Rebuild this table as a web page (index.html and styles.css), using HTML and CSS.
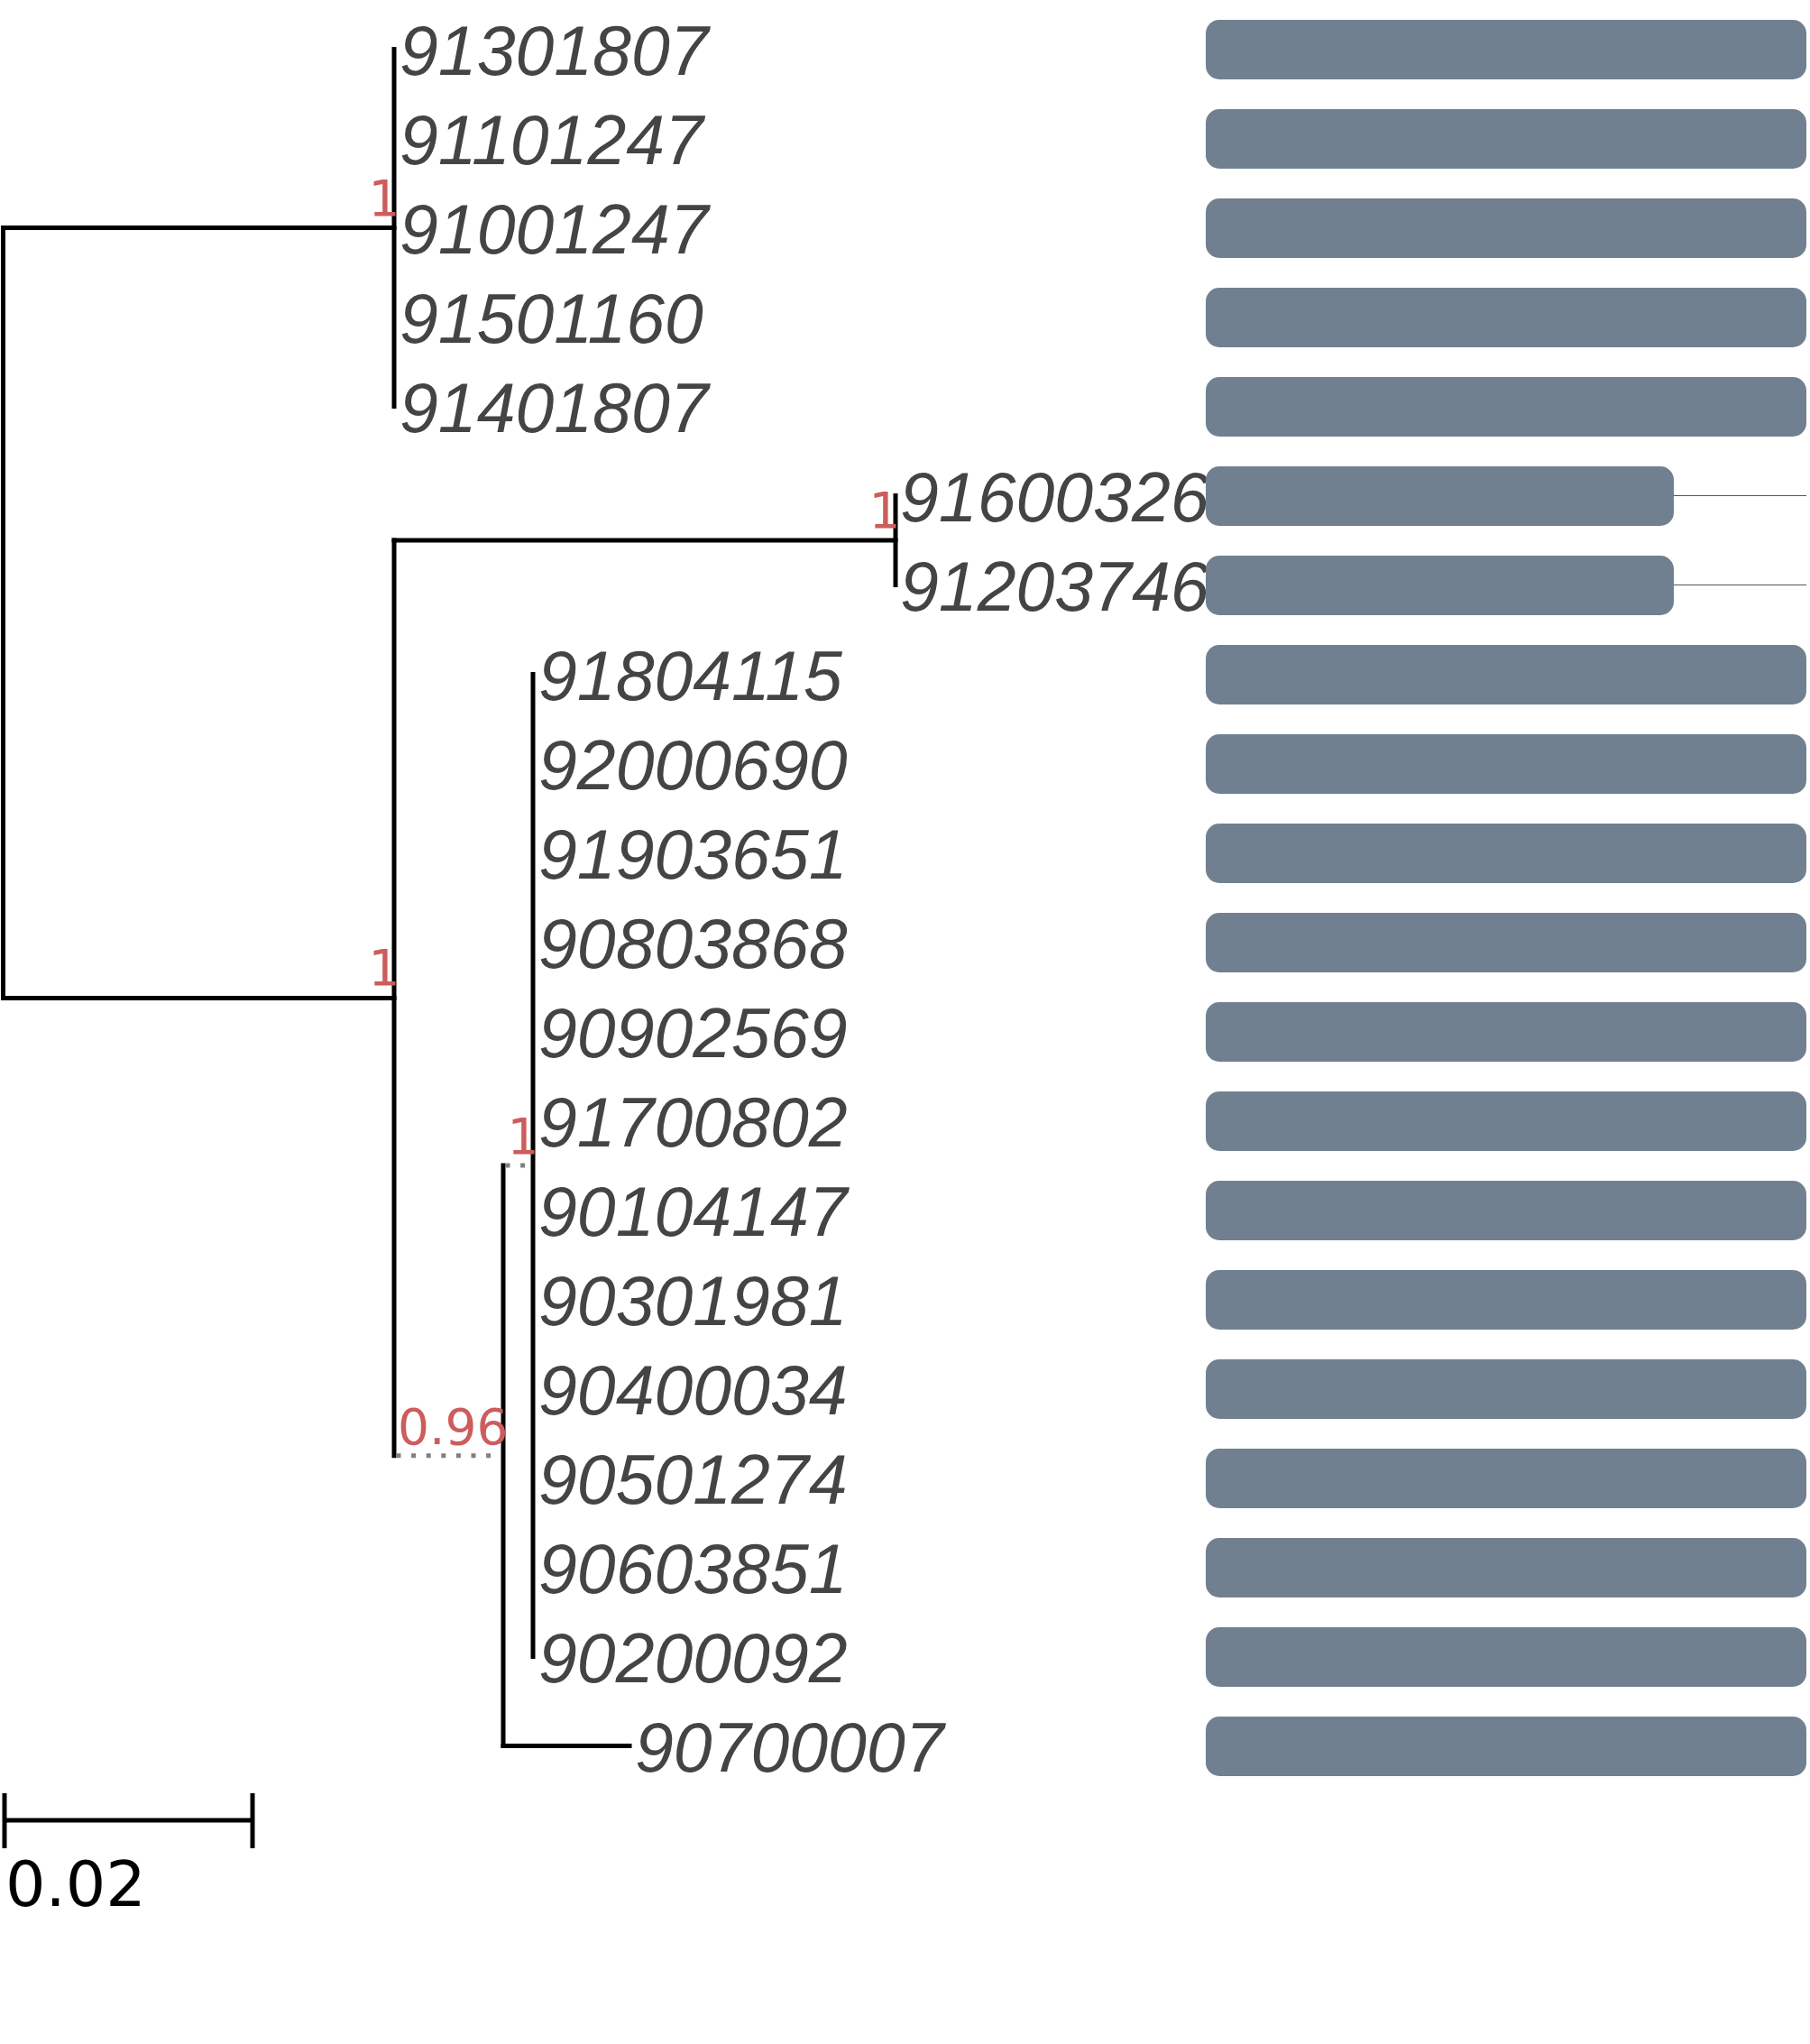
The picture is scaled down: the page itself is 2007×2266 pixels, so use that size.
FILE: index.html
```html
<!DOCTYPE html>
<html lang="en">
<head>
<meta charset="utf-8">
<title>Tree</title>
<link rel="stylesheet" href="styles.css">
</head>
<body>
<div class="figure">
  <svg class="tree" width="1337" height="1990" viewBox="0 0 1337 1990">
    <g class="solid">
      <line x1="3.5" y1="252.5" x2="3.5" y2="1106.4"/>
      <line x1="3.5" y1="252.5" x2="437" y2="252.5"/>
      <line x1="3.5" y1="1106.4" x2="437" y2="1106.4"/>
      <line x1="437" y1="54.5" x2="437" y2="450.5"/>
      <line x1="437" y1="599" x2="437" y2="1613.75"/>
      <line x1="437" y1="599" x2="993" y2="599"/>
      <line x1="993" y1="549.5" x2="993" y2="648.5"/>
      <line x1="558" y1="1292" x2="558" y2="1935.5"/>
      <line x1="558" y1="1935.5" x2="698" y2="1935.5"/>
      <line x1="591" y1="747.5" x2="591" y2="1836.5"/>
    </g>
    <g class="dotted">
      <line x1="439.5" y1="1613.75" x2="555.5" y2="1613.75"/>
      <line x1="560.5" y1="1292" x2="588.5" y2="1292"/>
    </g>
    <g class="support">
      <text x="443.5" y="239">1</text>
      <text x="443.5" y="1092.4">1</text>
      <text x="998.5" y="585">1</text>
      <text x="563.5" y="1601">0.96</text>
      <text x="597.5" y="1279">1</text>
    </g>
  </svg>

  <div class="rows">
    <div class="row"><div class="label-cell"><span class="label" style="margin-left:443px">91301807</span></div><div class="track"><div class="bar"></div></div></div>
    <div class="row"><div class="label-cell"><span class="label" style="margin-left:443px">91101247</span></div><div class="track"><div class="bar"></div></div></div>
    <div class="row"><div class="label-cell"><span class="label" style="margin-left:443px">91001247</span></div><div class="track"><div class="bar"></div></div></div>
    <div class="row"><div class="label-cell"><span class="label" style="margin-left:443px">91501160</span></div><div class="track"><div class="bar"></div></div></div>
    <div class="row"><div class="label-cell"><span class="label" style="margin-left:443px">91401807</span></div><div class="track"><div class="bar"></div></div></div>
    <div class="row"><div class="label-cell"><span class="label" style="margin-left:998px">91600326</span></div><div class="track"><div class="bar bar-short"></div><div class="tail"></div></div></div>
    <div class="row"><div class="label-cell"><span class="label" style="margin-left:998px">91203746</span></div><div class="track"><div class="bar bar-short"></div><div class="tail"></div></div></div>
    <div class="row"><div class="label-cell"><span class="label" style="margin-left:597px">91804115</span></div><div class="track"><div class="bar"></div></div></div>
    <div class="row"><div class="label-cell"><span class="label" style="margin-left:597px">92000690</span></div><div class="track"><div class="bar"></div></div></div>
    <div class="row"><div class="label-cell"><span class="label" style="margin-left:597px">91903651</span></div><div class="track"><div class="bar"></div></div></div>
    <div class="row"><div class="label-cell"><span class="label" style="margin-left:597px">90803868</span></div><div class="track"><div class="bar"></div></div></div>
    <div class="row"><div class="label-cell"><span class="label" style="margin-left:597px">90902569</span></div><div class="track"><div class="bar"></div></div></div>
    <div class="row"><div class="label-cell"><span class="label" style="margin-left:597px">91700802</span></div><div class="track"><div class="bar"></div></div></div>
    <div class="row"><div class="label-cell"><span class="label" style="margin-left:597px">90104147</span></div><div class="track"><div class="bar"></div></div></div>
    <div class="row"><div class="label-cell"><span class="label" style="margin-left:597px">90301981</span></div><div class="track"><div class="bar"></div></div></div>
    <div class="row"><div class="label-cell"><span class="label" style="margin-left:597px">90400034</span></div><div class="track"><div class="bar"></div></div></div>
    <div class="row"><div class="label-cell"><span class="label" style="margin-left:597px">90501274</span></div><div class="track"><div class="bar"></div></div></div>
    <div class="row"><div class="label-cell"><span class="label" style="margin-left:597px">90603851</span></div><div class="track"><div class="bar"></div></div></div>
    <div class="row"><div class="label-cell"><span class="label" style="margin-left:597px">90200092</span></div><div class="track"><div class="bar"></div></div></div>
    <div class="row"><div class="label-cell"><span class="label" style="margin-left:704px">90700007</span></div><div class="track"><div class="bar"></div></div></div>
  </div>

  <div class="scale">
    <svg class="scale-bar" width="290" height="66" viewBox="0 0 290 66">
      <line x1="5" y1="3" x2="5" y2="64"/>
      <line x1="280" y1="3" x2="280" y2="64"/>
      <line x1="5" y1="33" x2="280" y2="33"/>
    </svg>
    <div class="scale-label">0.02</div>
  </div>
</div>
</body>
</html>
```

FILE: styles.css
```css
html, body {
  margin: 0;
  padding: 0;
  background: #ffffff;
}

.figure {
  position: relative;
  width: 2007px;
  padding-top: 5px;
}

.tree {
  position: absolute;
  left: 0;
  top: 0;
  z-index: 1;
  overflow: visible;
  pointer-events: none;
}

.tree .solid line {
  stroke: #000000;
  stroke-width: 5;
  stroke-linecap: square;
}

.tree .dotted line {
  stroke: #808080;
  stroke-width: 5;
  stroke-dasharray: 5 11.6;
}

.tree .support text {
  font-family: "DejaVu Sans", sans-serif;
  font-size: 55px;
  fill: #cd5c5c;
  text-anchor: end;
}

.rows {
  display: flex;
  flex-direction: column;
}

.row {
  display: flex;
  align-items: center;
  height: 99px;
}

.label-cell {
  flex: 0 0 1337px;
  width: 1337px;
  min-width: 0;
  display: flex;
  align-items: center;
  white-space: nowrap;
  overflow: visible;
}

.label {
  flex: 0 0 auto;
  font-family: "Liberation Sans", Arial, sans-serif;
  font-style: italic;
  font-size: 77px;
  line-height: 77px;
  color: #444444;
  padding-top: 4px;
}

.track {
  position: relative;
  z-index: 2;
  flex: 0 0 666px;
  width: 666px;
  display: flex;
  align-items: center;
}

.bar {
  flex: 1 1 auto;
  height: 66px;
  border-radius: 15px;
  background: #708090;
}

.bar-short {
  flex: 0 0 519px;
}

.tail {
  flex: 1 1 auto;
  height: 1.5px;
  background: #555555;
}

.scale {
  display: flex;
  flex-direction: column;
}

.scale-bar line {
  stroke: #000000;
  stroke-width: 5;
}

.scale-label {
  margin-top: 3px;
  margin-left: 6px;
  font-family: "DejaVu Sans", sans-serif;
  font-size: 70px;
  line-height: 70px;
  color: #000000;
}
```
